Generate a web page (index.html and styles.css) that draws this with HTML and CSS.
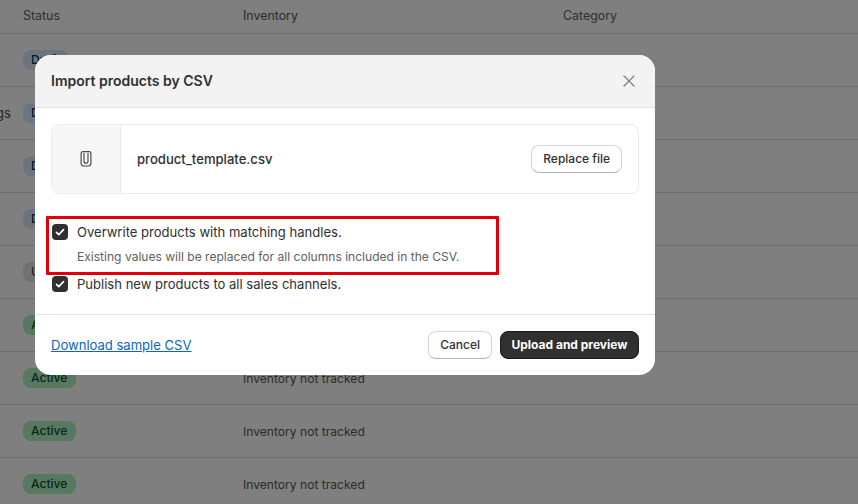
FILE: index.html
```html
<!DOCTYPE html>
<html lang="en">
<head>
<meta charset="utf-8">
<title>Import products by CSV</title>
<link rel="stylesheet" href="styles.css">
</head>
<body>
<div class="table">
  <div class="row head"><div class="lead"></div><div class="c-status">Status</div><div class="c-inv">Inventory</div><div class="c-cat">Category</div></div>
  <div class="row"><div class="lead"></div><div class="c-status"><span class="badge draft">Draft</span></div><div class="c-inv"></div></div>
  <div class="row"><div class="lead">gs</div><div class="c-status"><span class="badge draft">Draft</span></div><div class="c-inv"></div></div>
  <div class="row"><div class="lead"></div><div class="c-status"><span class="badge draft">Draft</span></div><div class="c-inv"></div></div>
  <div class="row"><div class="lead"></div><div class="c-status"><span class="badge draft">Draft</span></div><div class="c-inv"></div></div>
  <div class="row"><div class="lead"></div><div class="c-status"><span class="badge unlisted">Unlisted</span></div><div class="c-inv"></div></div>
  <div class="row"><div class="lead"></div><div class="c-status"><span class="badge active">Active</span></div><div class="c-inv"></div></div>
  <div class="row"><div class="lead"></div><div class="c-status"><span class="badge active">Active</span></div><div class="c-inv">Inventory not tracked</div></div>
  <div class="row"><div class="lead"></div><div class="c-status"><span class="badge active">Active</span></div><div class="c-inv">Inventory not tracked</div></div>
  <div class="row"><div class="lead"></div><div class="c-status"><span class="badge active">Active</span></div><div class="c-inv">Inventory not tracked</div></div>
</div>
<div class="backdrop"></div>
<section class="modal">
  <header class="modal-head">
    <h2 class="modal-title">Import products by CSV</h2>
    <svg class="close" width="14" height="14" viewBox="0 0 14 14"><path d="M2 2l10 10M12 2L2 12" fill="none" stroke="#808080" stroke-width="1.300" stroke-linecap="round"/></svg>
  </header>
  <div class="modal-body">
    <div class="file-card">
      <div class="thumb">
        <svg width="16" height="18" viewBox="0 0 16 18"><path d="M6 3.200v8.200c0 1 .8 1.700 2 1.700s2-.7 2-1.700V3.400" fill="none" stroke="#4a4a4a" stroke-width="1.200" stroke-linecap="round"/><path d="M5 1.600h6c1 0 1.900.8 1.900 1.800v9.900c0 1.500-1.200 2.700-2.700 2.700H5.800c-1.500 0-2.700-1.200-2.700-2.700V3.400c0-1 .9-1.800 1.900-1.800z" fill="none" stroke="#4a4a4a" stroke-width="1.200"/></svg>
      </div>
      <div class="file-name">product_template.csv</div>
      <button class="btn">Replace file</button>
    </div>
    <div class="options">
      <div class="option">
        <span class="check"><svg width="10" height="10" viewBox="0 0 10 10"><path d="M1.500 5.300l2.300 2.300 4.700-5" fill="none" stroke="#fff" stroke-width="1.700" stroke-linecap="round" stroke-linejoin="round"/></svg></span>
        <span class="opt-label">Overwrite products with matching handles.</span>
      </div>
      <div class="opt-help">Existing values will be replaced for all columns included in the CSV.</div>
      <div class="option second">
        <span class="check"><svg width="10" height="10" viewBox="0 0 10 10"><path d="M1.500 5.300l2.300 2.300 4.700-5" fill="none" stroke="#fff" stroke-width="1.700" stroke-linecap="round" stroke-linejoin="round"/></svg></span>
        <span class="opt-label">Publish new products to all sales channels.</span>
      </div>
      <div class="highlight"></div>
    </div>
  </div>
  <footer class="modal-foot">
    <a class="link" href="#">Download sample CSV</a>
    <div class="actions">
      <button class="btn">Cancel</button>
      <button class="btn primary">Upload and preview</button>
    </div>
  </footer>
</section>
</body>
</html>
```
FILE: styles.css
```css
* { box-sizing: border-box; }
html, body { margin: 0; height: 100%; }
body {
  position: relative;
  width: 858px;
  height: 504px;
  overflow: hidden;
  background: #fff;
  font-family: Inter, "Liberation Sans", sans-serif;
  font-size: 13px;
  color: #303030;
}
.table { display: flex; flex-direction: column; }
.row {
  flex: none;
  display: flex;
  align-items: center;
  height: 53px;
  border-bottom: 1px solid #d9d9d9;
  font-size: 12.100px;
}
.row.head { height: 34px; padding-bottom: 3px; color: #616161; font-size: 12.400px; }
.lead { width: 23px; flex: none; overflow: hidden; font-size: 13px; color: #4a4a4a; text-indent: -4px; }
.c-status { width: 220px; flex: none; }
.c-inv { width: 320px; flex: none; color: #555; }
.c-cat { flex: 1; }
.badge {
  display: inline-block;
  height: 20px;
  line-height: 20px;
  padding: 0 8.500px 0 8px;
  border-radius: 8px;
  font-weight: 500;
  font-size: 12.100px;
}
.draft { background: #d5ebff; color: #00335c; }
.unlisted { background: #e3e3e3; color: #444; }
.active { background: #aff2c0; color: #0c5132; }
.backdrop {
  position: absolute;
  inset: 0;
  background: rgba(0, 0, 0, .5);
}
.modal {
  position: absolute;
  left: 35px;
  top: 55px;
  width: 620px;
  height: 320px;
  background: #fff;
  border-radius: 16px;
  overflow: hidden;
  display: flex;
  flex-direction: column;
}
.modal-head {
  flex: none;
  height: 53px;
  display: flex;
  align-items: center;
  justify-content: space-between;
  padding: 0 19px 1px 16px;
  background: #f3f3f3;
  border-bottom: 1px solid #e3e3e3;
}
.modal-title { margin: 0; font-size: 14px; font-weight: 600; color: #303030; }
.modal-body { flex: 1; padding: 16px; display: flex; flex-direction: column; }
.file-card {
  flex: none;
  height: 70px;
  display: flex;
  align-items: center;
  border: 1px solid #ebebeb;
  border-radius: 8px;
  overflow: hidden;
  padding-right: 16px;
}
.thumb {
  flex: none;
  width: 69px;
  height: 100%;
  display: flex;
  align-items: center;
  justify-content: center;
  background: #f7f7f7;
  border-right: 1px solid #ebebeb;
}
.file-name { flex: 1; padding-left: 16px; font-weight: 500; font-size: 13.100px; color: #303030; }
.btn {
  height: 28px;
  padding: 0 11px 2px;
  background: #fff;
  border: 1px solid #d4d4d4;
  border-bottom-color: #b5b5b5;
  border-radius: 8px;
  font-family: inherit;
  font-size: 12px;
  font-weight: 500;
  color: #303030;
}
.options { position: relative; margin-top: 30px; }
.option { display: flex; align-items: center; gap: 9px; height: 16px; padding-left: 1px; }
.second { margin-top: 7px; }
.check {
  flex: none;
  width: 16px;
  height: 16px;
  display: flex;
  align-items: center;
  justify-content: center;
  background: #303030;
  border-radius: 4px;
}
.opt-label { font-size: 13.050px; color: #303030; }
.opt-help { margin-top: 9px; padding-left: 26px; height: 20px; line-height: 16px; font-size: 12.070px; color: #616161; }
.highlight {
  position: absolute;
  left: -5px;
  top: -8px;
  width: 453px;
  height: 59px;
  border: 3px solid #e0000a;
  border-radius: 1px;
}
.modal-foot {
  flex: none;
  height: 61px;
  display: flex;
  align-items: center;
  justify-content: space-between;
  padding: 0 16px;
  border-top: 1px solid #e3e3e3;
}
.link { color: #0a64c9; font-size: 13.050px; text-decoration: underline; }
.actions { display: flex; gap: 8px; }
.primary {
  padding: 0 10.500px 2px;
  background: #303030;
  border: 1px solid #1a1a1a;
  color: #fff;
  font-weight: 700;
}
```
